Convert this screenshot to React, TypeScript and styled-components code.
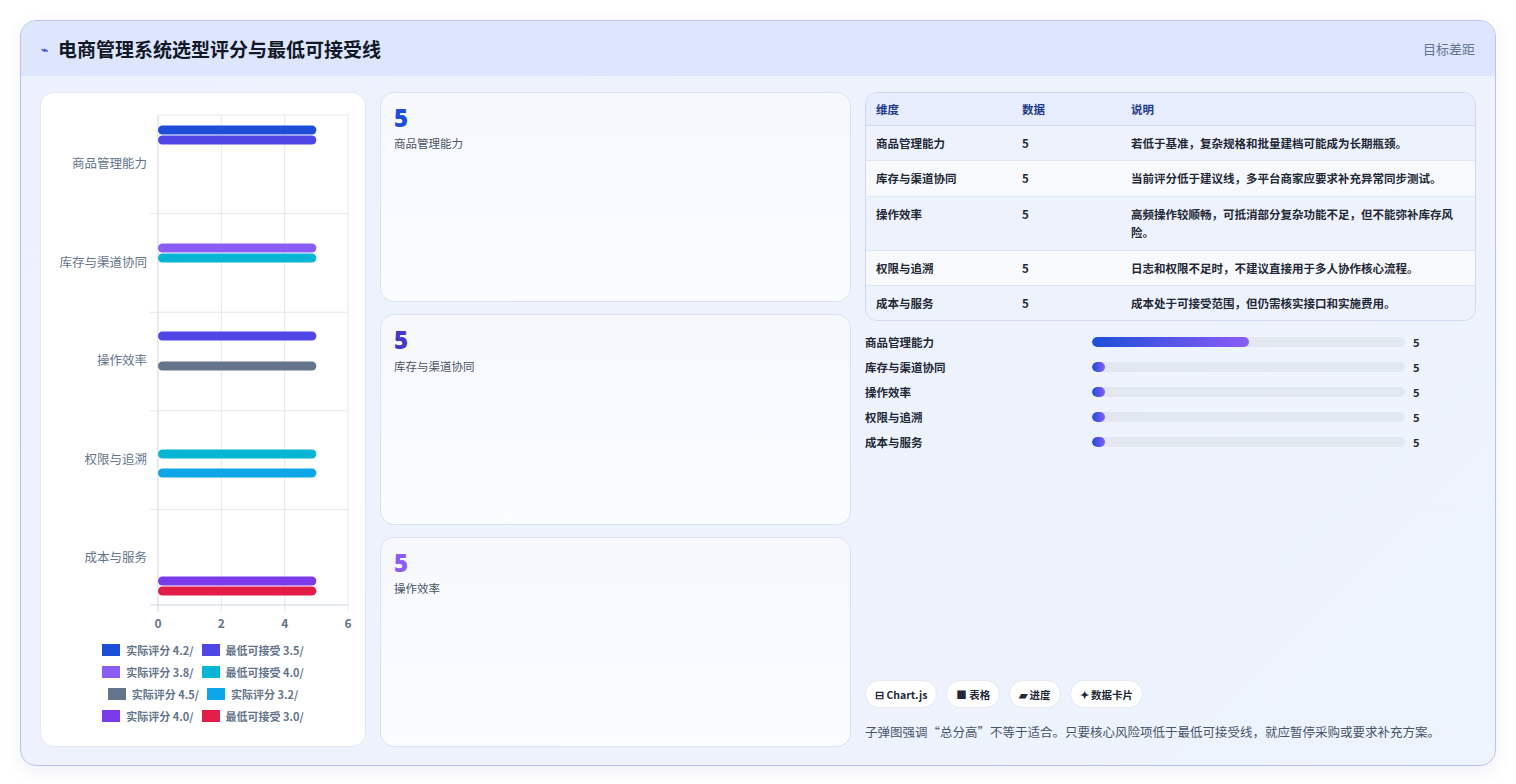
import React from "react";
import styled, { createGlobalStyle } from "styled-components";

const G = createGlobalStyle`
  body{margin:0;background:#fff;font-family:"Noto Sans CJK SC","Noto Sans",sans-serif;}
`;
const Page = styled.div`padding:20px;height:784px;box-sizing:border-box;`;
const Frame = styled.div`
  height:746px;box-sizing:border-box;border:1px solid #b8c4ee;border-radius:16px;overflow:hidden;
  background:linear-gradient(135deg,#edf1fd,#eef4fe);display:flex;flex-direction:column;
  box-shadow:0 6px 18px rgba(60,80,140,.08);
`;
const Header = styled.div`
  height:55px;flex:none;background:#dde6fd;display:flex;align-items:center;justify-content:space-between;padding:0 20px;
`;
const Title = styled.h1`margin:0;font-size:19px;font-weight:700;color:#111827;display:flex;align-items:center;gap:10px;`;
const Icon = styled.span`color:#3b5bdb;font-size:12px;`;
const Right = styled.span`font-size:13px;color:#64748b;`;
const Body = styled.div`flex:1;display:grid;grid-template-columns:326px 471px 1fr;gap:14px;padding:16px 19px 18px 19px;min-height:0;`;
const ChartCard = styled.div`background:#fff;border:1px solid #e2e8f0;border-radius:14px;display:flex;flex-direction:column;align-items:center;padding-bottom:12px;`;
const Legend = styled.div`display:flex;flex-wrap:wrap;justify-content:center;gap:6px 8px;width:250px;margin-top:4px;`;
const LItem = styled.span`display:flex;align-items:center;gap:6px;font-size:11px;font-weight:700;color:#64748b;`;
const Sw = styled.i<{ c: string }>`width:18px;height:12px;background:${p => p.c};display:inline-block;`;
const Cards = styled.div`display:flex;flex-direction:column;gap:12px;`;
const Card = styled.div`flex:1;border:1px solid #dbe3f3;border-radius:14px;background:linear-gradient(180deg,#f6f8fe,#fbfcff);padding:12px 13px;`;
const Num = styled.div<{ c: string }>`font-size:24px;font-weight:900;color:${p => p.c};line-height:1.1;font-family:"Noto Sans",sans-serif;`;
const CLabel = styled.div`font-size:11.5px;color:#4b5563;margin-top:4px;`;
const RightCol = styled.div`display:flex;flex-direction:column;min-height:0;`;
const Table = styled.table`
  width:100%;border-collapse:separate;border-spacing:0;border:1px solid #cfd8ee;border-radius:12px;overflow:hidden;font-size:11.5px;font-weight:700;color:#1f2937;
  th{background:#e7edfc;color:#1e3a8a;text-align:left;height:32px;padding:0 10px;border-bottom:1px solid #cfd8ee;}
  td{padding:8px 10px;vertical-align:top;line-height:1.6;border-bottom:1px solid #dfe6f3;}
  tr:nth-child(odd) td{background:#eef2fc;}
  tr:nth-child(even) td{background:#f7f9fc;}
  tr:last-child td{border-bottom:none;}
`;
const Bars = styled.div`display:flex;flex-direction:column;gap:7px;margin-top:12px;`;
const BRow = styled.div`display:grid;grid-template-columns:227px 313px 1fr;align-items:center;gap:0;font-size:11.5px;font-weight:700;color:#1f2937;height:18px;`;
const Track = styled.div`height:10px;background:#e2e8f0;border-radius:5px;overflow:hidden;`;
const Fill = styled.div`height:100%;border-radius:5px;background:linear-gradient(90deg,#1d4ed8,#8b5cf6);`;
const Val = styled.span`padding-left:8px;font-size:11px;`;
const Spacer = styled.div`flex:1;`;
const Chips = styled.div`display:flex;gap:9px;`;
const Chip = styled.span`background:#fff;border:1px solid #e5e9f2;border-radius:14px;height:26px;padding:0 9px;display:flex;align-items:center;font-size:10.5px;font-weight:700;color:#1f2937;gap:3px;`;
const Note = styled.p`margin:14px 0 6px;font-size:12.5px;color:#475569;`;

const cats = ["商品管理能力", "库存与渠道协同", "操作效率", "权限与追溯", "成本与服务"];
const bars: [number, string][][] = [
  [[130, "#1d4ed8"], [140, "#4f46e5"]],
  [[248, "#8b5cf6"], [258, "#06b6d4"]],
  [[336, "#4f46e5"], [366, "#64748b"]],
  [[454, "#06b6d4"], [473, "#0ea5e9"]],
  [[581, "#7c3aed"], [591, "#e11d48"]],
];
const legend: [string, string][] = [
  ["#1d4ed8", "实际评分 4.2/"], ["#4f46e5", "最低可接受 3.5/"], ["#8b5cf6", "实际评分 3.8/"], ["#06b6d4", "最低可接受 4.0/"],
  ["#64748b", "实际评分 4.5/"], ["#0ea5e9", "实际评分 3.2/"], ["#7c3aed", "实际评分 4.0/"], ["#e11d48", "最低可接受 3.0/"],
];

function Chart() {
  const ox = 40, oy = 93;
  const X = (v: number) => 157 - ox + v * 31.67;
  return (
    <svg width="324" height="545" style={{ display: "block" }}>
      {[0, 1, 2, 3].map(i => <line key={i} x1={X(i * 2)} x2={X(i * 2)} y1={115 - oy} y2={612 - oy} stroke={i ? "#e5e7eb" : "#d1d5db"} />)}
      <line x1={X(0)} x2={X(6)} y1={115 - oy} y2={115 - oy} stroke="#e5e7eb" />
      {[1, 2, 3, 4].map(i => <line key={i} x1={X(0) - 8} x2={X(6)} y1={115 - oy + i * 98.6} y2={115 - oy + i * 98.6} stroke="#e5e7eb" />)}
      <line x1={X(0) - 8} x2={X(6)} y1={605 - oy} y2={605 - oy} stroke="#cbd5e1" />
      {cats.map((c, i) => <text key={c} x={146 - ox} y={164 - oy + i * 98.6 + 4} textAnchor="end" fontSize="12.5" fill="#64748b">{c}</text>)}
      {bars.flat().map(([y, col], i) => <rect key={i} x={X(0)} y={y - oy - 4.5} width={X(5) - X(0)} height={9} rx={4.5} fill={col} />)}
      {[0, 2, 4, 6].map(v => <text key={v} x={X(v)} y={628 - oy} textAnchor="middle" fontSize="12" fontWeight="700" fill="#64748b">{v}</text>)}
    </svg>
  );
}

const rows = [
  ["商品管理能力", "若低于基准，复杂规格和批量建档可能成为长期瓶颈。"],
  ["库存与渠道协同", "当前评分低于建议线，多平台商家应要求补充异常同步测试。"],
  ["操作效率", "高频操作较顺畅，可抵消部分复杂功能不足，但不能弥补库存风险。"],
  ["权限与追溯", "日志和权限不足时，不建议直接用于多人协作核心流程。"],
  ["成本与服务", "成本处于可接受范围，但仍需核实接口和实施费用。"],
];

export default function App() {
  return (
    <Page>
      <G />
      <Frame>
        <Header>
          <Title><Icon>⌁</Icon>电商管理系统选型评分与最低可接受线</Title>
          <Right>目标差距</Right>
        </Header>
        <Body>
          <ChartCard>
            <Chart />
            <Legend>
              {legend.map(([c, t]) => <LItem key={t + c}><Sw c={c} />{t}</LItem>)}
            </Legend>
          </ChartCard>
          <Cards>
            <Card><Num c="#1d4ed8">5</Num><CLabel>商品管理能力</CLabel></Card>
            <Card><Num c="#4338ca">5</Num><CLabel>库存与渠道协同</CLabel></Card>
            <Card><Num c="#8b5cf6">5</Num><CLabel>操作效率</CLabel></Card>
          </Cards>
          <RightCol>
            <Table>
              <colgroup><col style={{ width: 146 }} /><col style={{ width: 109 }} /><col /></colgroup>
              <thead><tr><th>维度</th><th>数据</th><th>说明</th></tr></thead>
              <tbody>{rows.map(r => <tr key={r[0]}><td>{r[0]}</td><td>5</td><td>{r[1]}</td></tr>)}</tbody>
            </Table>
            <Bars>
              {cats.map((c, i) => (
                <BRow key={c}>
                  <span>{c}</span>
                  <Track><Fill style={{ width: i === 0 ? "50%" : "4%" }} /></Track>
                  <Val>5</Val>
                </BRow>
              ))}
            </Bars>
            <Spacer />
            <Chips>
              <Chip>⊟ Chart.js</Chip><Chip>■ 表格</Chip><Chip>▰ 进度</Chip><Chip>✦ 数据卡片</Chip>
            </Chips>
            <Note>子弹图强调“总分高”不等于适合。只要核心风险项低于最低可接受线，就应暂停采购或要求补充方案。</Note>
          </RightCol>
        </Body>
      </Frame>
    </Page>
  );
}
